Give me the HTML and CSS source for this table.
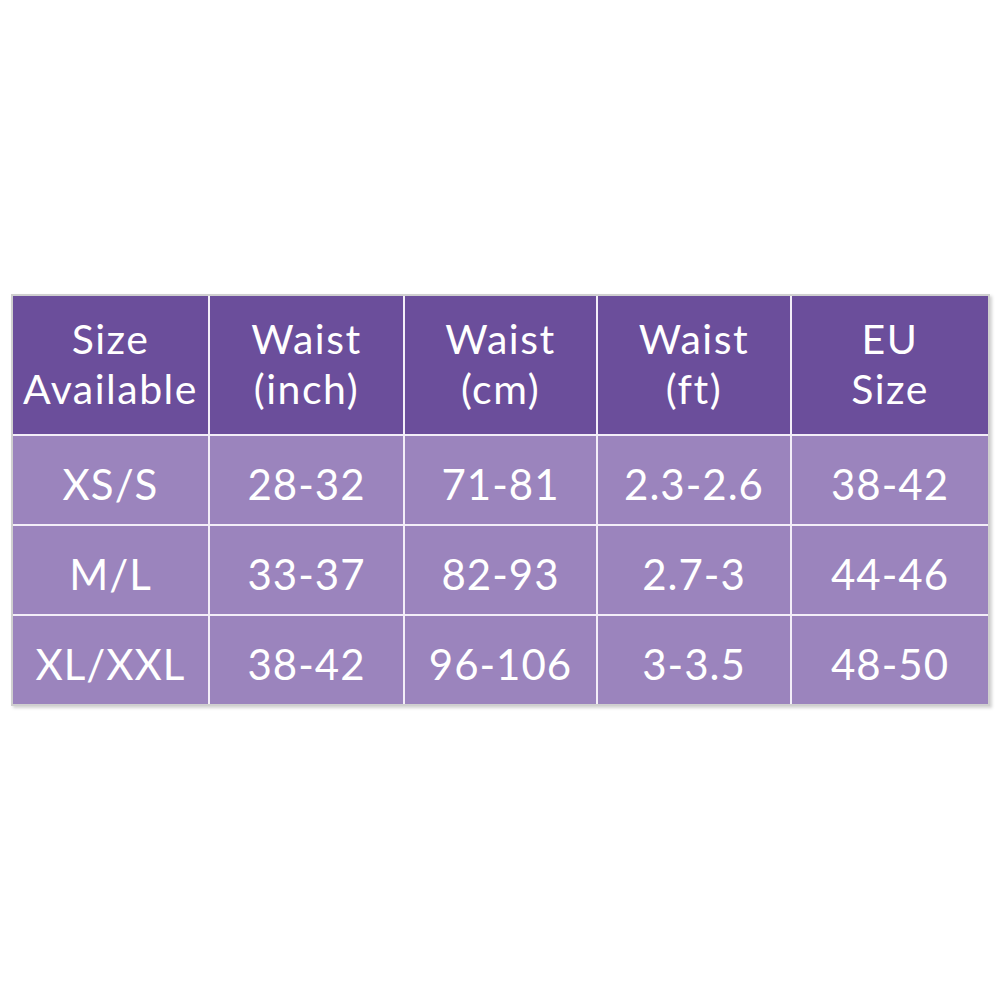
FILE: index.html
```html
<!DOCTYPE html>
<html>
<head>
<meta charset="utf-8">
<link rel="stylesheet" href="styles.css">
</head>
<body>
<div class="page">
  <div class="chart">
    <div class="cell head">Size<br>Available</div>
    <div class="cell head">Waist<br>(inch)</div>
    <div class="cell head">Waist<br>(cm)</div>
    <div class="cell head">Waist<br>(ft)</div>
    <div class="cell head">EU<br>Size</div>

    <div class="cell">XS/S</div>
    <div class="cell">28-32</div>
    <div class="cell">71-81</div>
    <div class="cell">2.3-2.6</div>
    <div class="cell">38-42</div>

    <div class="cell">M/L</div>
    <div class="cell">33-37</div>
    <div class="cell">82-93</div>
    <div class="cell">2.7-3</div>
    <div class="cell">44-46</div>

    <div class="cell">XL/XXL</div>
    <div class="cell">38-42</div>
    <div class="cell">96-106</div>
    <div class="cell">3-3.5</div>
    <div class="cell">48-50</div>
  </div>
</div>
</body>
</html>
```
FILE: styles.css
```css
html, body {
  margin: 0;
  padding: 0;
  background: #ffffff;
}
.page {
  width: 1000px;
  height: 1000px;
  padding-top: 294px;
  padding-left: 11px;
  box-sizing: border-box;
}
.chart {
  display: grid;
  grid-template-columns: 195px 193px 191px 192px 196px;
  grid-template-rows: 138px 88px 88px 88px;
  gap: 2px;
  width: max-content;
  background: #f3eef8;
  border: 2px solid #cfcfcf;
  box-shadow: 2px 2px 3px rgba(0,0,0,0.18);
}
.cell {
  display: flex;
  align-items: center;
  justify-content: center;
  text-align: center;
  background: #9b84bd;
  color: #ffffff;
  font-family: Lato, "Noto Sans", sans-serif;
  font-size: 42px;
  letter-spacing: 1px;
  padding-top: 8px;
  box-sizing: border-box;
}
.head {
  background: #6b4e9b;
  font-size: 41px;
  letter-spacing: 1.5px;
  line-height: 50px;
  padding-top: 0;
  padding-bottom: 2px;
}
```
